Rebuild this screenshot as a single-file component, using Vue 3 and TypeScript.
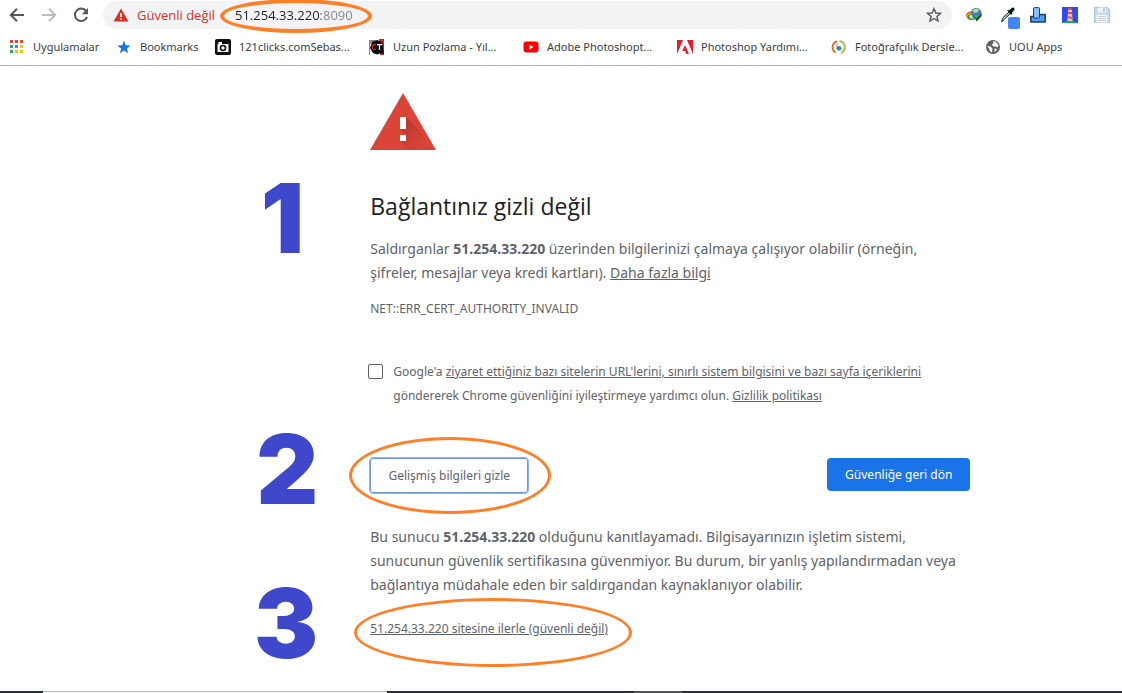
<script setup lang="ts">
import { ref } from 'vue'

interface Bookmark {
  label: string
  icon: 'apps' | 'star' | 'camera' | 'ct' | 'youtube' | 'adobe' | 'ring' | 'globe'
  size: 'apps' | 'short' | 'long'
}

const bookmarks: Bookmark[] = [
  { label: 'Uygulamalar', icon: 'apps', size: 'apps' },
  { label: 'Bookmarks', icon: 'star', size: 'short' },
  { label: '121clicks.comSebas...', icon: 'camera', size: 'long' },
  { label: 'Uzun Pozlama - Yıl...', icon: 'ct', size: 'long' },
  { label: 'Adobe Photoshopt...', icon: 'youtube', size: 'long' },
  { label: 'Photoshop Yardımı...', icon: 'adobe', size: 'long' },
  { label: 'Fotoğrafçılık Dersle...', icon: 'ring', size: 'long' },
  { label: 'UOU Apps', icon: 'globe', size: 'short' },
]

const appColors = ['#ea4335', '#ea4335', '#ea4335', '#34a853', '#4285f4', '#fbbc05', '#34a853', '#fbbc05', '#fbbc05']

const host = '51.254.33.220'
const address = ref(`${host}:8090`)
const optIn = ref(false)
</script>

<template>
  <div class="page">
    <header class="browser">
      <div class="toolbar">
        <nav class="nav">
          <button type="button" class="icon-button" aria-label="Geri">
            <svg width="16" height="16" viewBox="0 0 16 16" fill="none" stroke="#54585d" stroke-width="2"><path d="M15 8H2.500M8 1.800L1.800 8L8 14.200" /></svg>
          </button>
          <button type="button" class="icon-button" aria-label="İleri">
            <svg width="16" height="16" viewBox="0 0 16 16" fill="none" stroke="#babcbe" stroke-width="2"><path d="M1 8H13.500M8 1.800L14.200 8L8 14.200" /></svg>
          </button>
          <button type="button" class="icon-button" aria-label="Yenile">
            <svg width="16" height="16" viewBox="0 0 16 16"><path d="M13.200 4.200A6.200 6.200 0 1 0 14 9.800" fill="none" stroke="#54585d" stroke-width="2" /><path d="M15 1V7.200H8.800Z" fill="#54585d" /></svg>
          </button>
        </nav>
        <div class="omnibox">
          <svg class="warn" width="16" height="14" viewBox="0 0 16 14"><path d="M8 0.500L15.500 13.500H0.500Z" fill="#d93025" /><path d="M7.200 5h1.600v4H7.200zM7.200 10.200h1.600v1.600H7.200z" fill="#fff" /></svg>
          <span class="insecure">Güvenli değil</span>
          <div class="address-wrap">
            <input v-model="address" class="address" type="text" aria-label="Adres" spellcheck="false" />
            <span class="ring ring-address"></span>
          </div>
          <button type="button" class="icon-button" aria-label="Yer işareti ekle">
            <svg width="16" height="16" viewBox="0 0 16 16" fill="none" stroke="#54585d" stroke-width="1.400"><path d="M8 1.600L9.800 6L14.600 6.300L10.900 9.400L12.100 14L8 11.500L3.900 14L5.100 9.400L1.400 6.300L6.200 6Z" /></svg>
          </button>
        </div>
        <div class="extensions">
          <button type="button" class="icon-button" aria-label="İndirme yöneticisi">
            <svg width="16" height="16" viewBox="0 0 16 16"><ellipse cx="5" cy="8.500" rx="5" ry="4" fill="#d94b1c" /><ellipse cx="5.500" cy="9.300" rx="4.600" ry="3.400" fill="#f2d21b" /><ellipse cx="6" cy="10" rx="4.600" ry="3" fill="#2e9b2e" /><ellipse cx="7" cy="9.500" rx="3.500" ry="2" fill="#e8f0e0" /><circle cx="10.200" cy="6" r="5.200" fill="#3e7fbd" /><path d="M6.500 3.500Q9 0.500 13 2L12 5L8.500 6Z" fill="#c4d88a" /><path d="M5.500 9L9 10.500Q14 10 15.200 5.500L15.800 9L10.500 14.500L9.500 12Z" fill="#164f20" /><path d="M8 8.500h4.500l-2 3z" fill="#55b93d" /></svg>
          </button>
          <button type="button" class="icon-button" aria-label="Renk seçici">
            <svg width="22" height="22" viewBox="-2 0 22 22"><path d="M1.500 14.500L3 10.500L9 5L10.500 6.500L4.500 12L2 15Z" fill="#a6c4b7" stroke="#203a32" /><path d="M7 3.500L9.500 3L12 0.700Q15 0 14.500 3L12.500 5L12 7.500L10.500 7.500Z" fill="#101514" /><rect x="8" y="10" width="12" height="12" rx="2" fill="#4285f4" /></svg>
          </button>
          <button type="button" class="icon-button" aria-label="Cihazlar">
            <svg width="16" height="16" viewBox="0 0 16 16" stroke="#243a51"><path d="M0.800 9.500H8V7.500H15.200V15H0.800Z" fill="#4ba0f8" stroke-width="1.500" stroke-linejoin="round" /><rect x="3.500" y="0.600" width="6" height="10.400" rx="1" fill="#86c0f8" /></svg>
          </button>
          <button type="button" class="icon-button" aria-label="Deniz feneri">
            <svg width="16" height="16" viewBox="0 0 16 16"><path d="M0 0H16V16H0Z" fill="#2d4cf5" /><path d="M0 16Q8 11 16 16Z" fill="#19b04a" /><path d="M6.200 3H9.800L10.600 14H5.400Z" fill="#f4c9b4" /><path d="M6.300 0.800H9.700V3H6.300ZM6 5H10V7.500L5.800 6.700ZM5.700 9L10.300 10V12L5.500 11Z" fill="#f0502c" /></svg>
          </button>
          <button type="button" class="icon-button" aria-label="Kaydet">
            <svg width="16" height="16" viewBox="0 0 16 16"><path d="M0.500 0.500H13.500L15.500 2.500V15.500H0.500Z" fill="#c5d9f5" stroke="#a9c2e8" /><path d="M4 0.500H12V5.500H4Z" fill="#f1f1ee" /><path d="M9 1.500h2v3H9z" fill="#a9c2e8" /><path d="M2.500 8H13.500V15.500H2.500Z" fill="#f7f7f4" /><path d="M4 9.500h8M4 11.500h8M4 13.500h8" stroke="#c9ccce" /></svg>
          </button>
        </div>
      </div>
      <nav class="bookmarks">
        <a v-for="b in bookmarks" :key="b.label" href="#" class="bookmark" :class="b.size">
          <svg class="favicon" width="16" height="16" viewBox="0 0 16 16">
            <template v-if="b.icon === 'apps'">
              <rect v-for="(c, i) in appColors" :key="i" :x="1 + (i % 3) * 5" :y="1 + Math.floor(i / 3) * 5" width="3" height="3" :fill="c" />
            </template>
            <path v-else-if="b.icon === 'star'" d="M8 1.500L9.700 6.200L14.700 6.400L10.800 9.500L12.200 14.300L8 11.500L3.800 14.300L5.200 9.500L1.300 6.400L6.300 6.200Z" fill="#1a73e8" />
            <template v-else-if="b.icon === 'camera'">
              <rect width="16" height="16" rx="2" fill="#111" /><path d="M2.500 5H13.500V13H2.500ZM3.500 3H7V5H3.500Z" fill="#fff" /><circle cx="8" cy="9" r="3.300" fill="#111" /><circle cx="8" cy="9" r="1.700" fill="#fff" />
            </template>
            <template v-else-if="b.icon === 'ct'">
              <path d="M10 0H15V16H11Z" fill="#c62424" /><path d="M0 1H8L4 3H0ZM0 3H3L1 6V16H0Z" fill="#85898a" /><path d="M3 3L8 1L13 3L14 9L15 15L12 14L8 15.500L4 14L1 9Z" fill="#080808" /><path d="M7 5.700H4.500Q3.500 5.700 3.500 6.500V9.500Q3.500 10.300 4.500 10.300H7" fill="none" stroke="#d83030" stroke-width="1.200" /><path d="M8 5.700H13M10.500 5.700V11" stroke="#f1f1f1" stroke-width="1.200" />
            </template>
            <template v-else-if="b.icon === 'youtube'">
              <rect x="0.500" y="2.500" width="15" height="11" rx="3" fill="#f00" /><path d="M6.300 5.500L10.500 8L6.300 10.500Z" fill="#fff" />
            </template>
            <template v-else-if="b.icon === 'adobe'">
              <path d="M0 1H6L0 15ZM10 1H16V15ZM8 6L12 15H9.400L8.200 12H5.300Z" fill="#e51c24" />
            </template>
            <template v-else-if="b.icon === 'ring'">
              <path d="M6 2.200A6.300 6.300 0 0 0 4.500 13.500" fill="none" stroke="#e36b2e" stroke-width="2" /><path d="M8.500 2A6.300 6.300 0 0 1 10 14" fill="none" stroke="#9fc54d" stroke-width="2" /><path d="M6 4.500V10" stroke="#e4a52f" stroke-width="1.200" /><circle cx="8" cy="9.300" r="2.400" fill="#2d85c5" />
            </template>
            <template v-else>
              <circle cx="8" cy="8" r="7" fill="#5b6066" /><path d="M2.300 7L5.500 7.500L7.500 9.500L7 13.500L5 12.500L4.500 10.500ZM8 2.500L10.500 2.500L13.500 6L12.500 8.500L11 7.500L8.500 7.500L6.500 5.500L8.500 4.500ZM9.500 9.500L12 10L11 12L9.500 13Z" fill="#fff" />
            </template>
          </svg>
          <span>{{ b.label }}</span>
        </a>
      </nav>
    </header>

    <main class="content">
      <section class="step intro">
        <svg class="alert" width="66" height="57" viewBox="0 0 66 57">
          <defs>
            <linearGradient id="shade" x1="0" y1="0" x2="1" y2="1"><stop offset="0" stop-color="#000" stop-opacity="0.200" /><stop offset="0.700" stop-color="#000" stop-opacity="0.020" /></linearGradient>
          </defs>
          <path d="M33 0L66 57H0Z" fill="#db4437" />
          <path d="M36 24L49.500 37.500L61 57H39L30 48L36 42L30 36Z" fill="url(#shade)" />
          <path d="M30 24h6v12h-6zM30 42h6v6h-6z" fill="#fff" />
        </svg>
        <h1>Bağlantınız gizli değil</h1>
        <p class="body">
          Saldırganlar <strong>{{ host }}</strong> üzerinden bilgilerinizi çalmaya çalışıyor olabilir (örneğin,<br />
          şifreler, mesajlar veya kredi kartları). <a href="#">Daha fazla bilgi</a>
        </p>
        <p class="code">NET::ERR_CERT_AUTHORITY_INVALID</p>
        <span class="number number-one">1</span>
      </section>

      <div class="opt-in">
        <input id="opt-in" v-model="optIn" type="checkbox" />
        <label for="opt-in">
          Google'a <a href="#">ziyaret ettiğiniz bazı sitelerin URL'lerini, sınırlı sistem bilgisini ve bazı sayfa içeriklerini</a><br />
          göndererek Chrome güvenliğini iyileştirmeye yardımcı olun. <a href="#">Gizlilik politikası</a>
        </label>
      </div>

      <section class="step actions">
        <div class="marked">
          <button type="button" class="action secondary">Gelişmiş bilgileri gizle</button>
          <span class="ring ring-button"></span>
        </div>
        <button type="button" class="action primary">Güvenliğe geri dön</button>
        <span class="number number-two">2</span>
      </section>

      <p class="body details">
        Bu sunucu <strong>{{ host }}</strong> olduğunu kanıtlayamadı. Bilgisayarınızın işletim sistemi,<br />
        sunucunun güvenlik sertifikasına güvenmiyor. Bu durum, bir yanlış yapılandırmadan veya<br />
        bağlantıya müdahale eden bir saldırgandan kaynaklanıyor olabilir.
      </p>

      <section class="step proceed">
        <div class="marked">
          <a href="#">{{ host }} sitesine ilerle (güvenli değil)</a>
          <span class="ring ring-link"></span>
        </div>
        <span class="number number-three">3</span>
      </section>
    </main>

    <footer class="taskbar"><span class="taskbar-start"></span><span class="taskbar-search"></span><span class="taskbar-rest"></span><span class="taskbar-active"></span><span class="taskbar-end"></span></footer>
  </div>
</template>

<style>
body {
  margin: 0;
  background: #fff;
}
</style>

<style scoped>
.page {
  display: flex;
  flex-direction: column;
  min-height: 100vh;
  overflow: hidden;
  box-sizing: border-box;
  font-family: "Segoe UI", "Noto Sans", "Open Sans", sans-serif;
  color: #5f6368;
}

.browser {
  border-bottom: 1px solid #b3b4b6;
}

.toolbar {
  display: flex;
  align-items: center;
  height: 30px;
}

.icon-button {
  display: flex;
  flex: none;
  padding: 0;
  border: 0;
  background: none;
}

.nav {
  display: flex;
  gap: 16px;
  padding: 0 14px 0 9px;
}

.omnibox {
  display: flex;
  flex: 1;
  align-items: center;
  height: 28px;
  min-width: 0;
  box-sizing: border-box;
  padding: 0 10px;
  border-radius: 14px;
  background: #f1f3f4;
  font-family: "Segoe UI", "Open Sans", sans-serif;
  font-size: 13px;
}

.warn {
  flex: none;
  margin-right: 8px;
}

.insecure {
  flex: none;
  width: 98px;
  color: #d93025;
  white-space: nowrap;
}

.address-wrap {
  position: relative;
  flex: 1;
  min-width: 0;
}

.address {
  display: block;
  width: 100%;
  padding: 0;
  border: 0;
  outline: 0;
  font: inherit;
  line-height: 20px;
  color: transparent;
  background: linear-gradient(90deg, #202124 86px, #80868b 86px);
  -webkit-background-clip: text;
  background-clip: text;
}

.extensions {
  display: flex;
  align-items: center;
  gap: 16px;
  height: 30px;
  padding: 0 12px 0 14px;
}

.extensions .icon-button {
  width: 16px;
  height: 16px;
}

.extensions svg {
  flex: none;
}

.bookmarks {
  display: flex;
  align-items: center;
  height: 33px;
  padding: 0 0 2px 9px;
  font-size: 11px;
  line-height: 16px;
}

.bookmark {
  display: flex;
  flex: none;
  gap: 8px;
  color: #3c4043;
  text-decoration: none;
  white-space: nowrap;
}

.apps {
  width: 107px;
}

.short {
  width: 99px;
}

.long {
  width: 154px;
}

.favicon {
  flex: none;
}

.content {
  flex: 1;
  width: 600px;
  max-width: 67%;
  margin-left: 33%;
  padding-top: 27px;
  font-size: 12px;
  line-height: 20px;
}

.content a {
  color: inherit;
}

.step {
  position: relative;
}

.alert {
  display: block;
}

h1 {
  margin: 42px 0 17px;
  color: #202124;
  font-family: "Segoe UI", "Open Sans", sans-serif;
  font-size: 23px;
  font-weight: 400;
  line-height: 28px;
}

.body {
  margin: 0;
  font-size: 14px;
  line-height: 24px;
  white-space: nowrap;
}

.code {
  margin: 14px 0 0;
}

.opt-in {
  display: flex;
  gap: 10px;
  margin: 41px 0 50px -2px;
  line-height: 24px;
  white-space: nowrap;
}

.opt-in input {
  appearance: none;
  flex: none;
  width: 15px;
  height: 15px;
  margin: 4px 0 0;
  border: 1px solid #5f6368;
  border-radius: 2px;
  background: #fff;
}

.actions {
  display: flex;
  align-items: flex-start;
  justify-content: space-between;
}

.marked {
  position: relative;
  width: fit-content;
}

.action {
  box-sizing: border-box;
  height: 33px;
  padding: 0 16px;
  border: 0;
  border-radius: 4px;
  font-family: inherit;
  font-size: 12px;
  white-space: nowrap;
}

.secondary {
  width: 158px;
  height: 35px;
  border: 1px solid #6f96d8;
  border-radius: 3px;
  outline: 1px solid #8fb3ee;
  color: #5f6368;
  background: #fff;
}

.primary {
  width: 143px;
  color: #fff;
  background: #1a73e8;
}

.details {
  margin: 32px 0 22px;
}

.ring {
  position: absolute;
  border: 3px solid #ff7f27;
  border-radius: 50%;
  pointer-events: none;
}

.ring-address {
  top: -6px;
  left: -15px;
  width: 144px;
  height: 26px;
  border-width: 4px;
}

.ring-button {
  inset: -21px -23px -21px -21px;
}

.ring-link {
  inset: -21px -24px -28px -16px;
}

.number {
  position: absolute;
  right: 100%;
  color: #3f48cc;
  font-family: "Arial Black", Inter, sans-serif;
  font-size: 96px;
  font-weight: 900;
  line-height: 72px;
}

.number-one {
  top: 89px;
  margin-right: 66px;
}

.number-two {
  top: -25px;
  margin-right: 52px;
}

.number-three {
  top: -32px;
  margin-right: 52px;
}

.taskbar {
  display: flex;
  height: 2px;
  background: #203040;
}

.taskbar-start {
  width: 43px;
}

.taskbar-search {
  width: 344px;
  box-sizing: border-box;
  border-top: 1px solid #bcbcbc;
  background: #f2f2f2;
}

.taskbar-rest {
  width: 247px;
}

.taskbar-active {
  width: 48px;
  background: #4b5866;
}

.taskbar-end {
  flex: 1;
}
</style>
